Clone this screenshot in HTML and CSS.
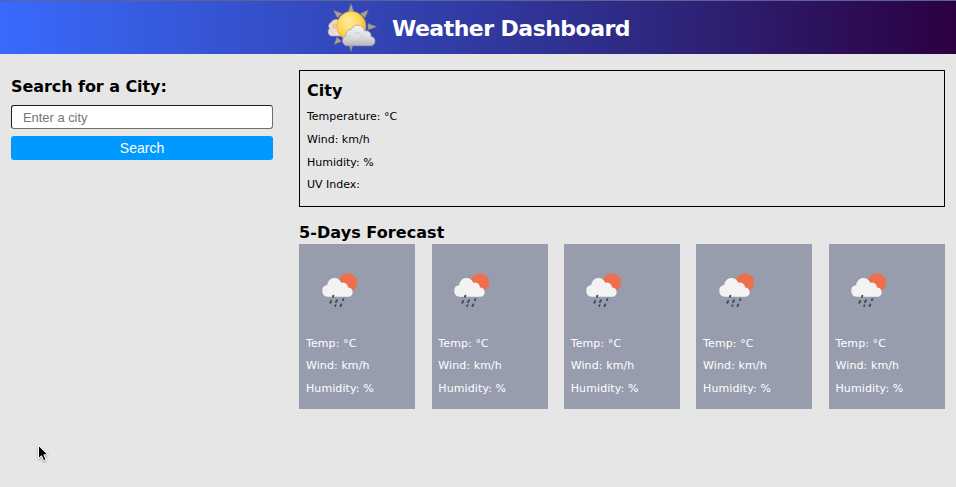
FILE: index.html
```html
<!DOCTYPE html>
<html lang="en">
<head>
<meta charset="utf-8">
<title>Weather Dashboard</title>
<link rel="stylesheet" href="styles.css">
</head>
<body>
<svg class="defs" aria-hidden="true">
  <symbol id="rain" viewBox="0 0 50 50">
    <circle cx="33" cy="17.500" r="9.300" fill="#ee6f4d"/>
    <path d="M12.500 31.700a5.900 5.900 0 0 1-.2-11.700 7.200 7.200 0 0 1 14-2.200 5 5 0 0 1 6.700 4.700 4.700 4.700 0 0 1 1.300 9.200z" fill="#f3f3f3"/>
    <path d="M18.300 30.800l-.3.900M16.200 36l-.9 1.800M22 35.200l-1 1.900M28.300 34.200l-.4.900M20.500 40.300l-.3.600M26.300 39.500l-.8 1.500" stroke="#4a4b52" stroke-width="2" stroke-linecap="round"/>
  </symbol>
</svg>
<header class="header">
  <svg class="logo" viewBox="0 0 64 56" aria-hidden="true">
    <defs>
      <radialGradient id="sun" cx=".4" cy=".35" r=".7"><stop offset="0" stop-color="#fff09a"/><stop offset=".6" stop-color="#fcd552"/><stop offset="1" stop-color="#edaf35"/></radialGradient>
      <linearGradient id="cloud" x1="0" y1="0" x2="0" y2="1"><stop offset="0" stop-color="#f4f4f4"/><stop offset=".6" stop-color="#dcdcde"/><stop offset="1" stop-color="#b5b5b9"/></linearGradient>
    </defs>
    <path d="M12 36a4.500 4.500 0 0 1-1.500-7.500 4 4 0 0 1 1.500-6 6 6 0 0 1 11 1.500v12z" fill="#e6dcda" stroke="#b9aaa6" stroke-width=".7"/>
    <circle cx="16" cy="26" r="3" fill="#fac292"/>
    <path d="M32 3.500l3 8.500h-6zM14.500 10.300l8.500 3.200-4.500 4.500zM49.300 10l-3.300 8-4.700-4.500zM57.500 26.800l-8.500 3.200v-6.500zM15 44.500l3-7.500 4.500 4.500zM32 51.700l-2.500-8.500h5z" fill="#aaa095" stroke="#77777f" stroke-width=".6"/>
    <circle cx="32.300" cy="26" r="14.500" fill="url(#sun)" stroke="#dca849" stroke-width=".7"/>
    <path d="M29 45.700a5 5 0 0 1-2-9.700 5.400 5.400 0 0 1 5.300-6.700 7 7 0 0 1 13.200 1.700 5 5 0 0 1 6.500 5.500 4.700 4.700 0 0 1 .5 9.200z" fill="url(#cloud)" stroke="#a3a3a8" stroke-width=".8"/>
    <path d="M28 37q4-2.500 6.500 1M35 35q2-4 6-2M40 39q2-4 6-2" fill="none" stroke="#c5c5c9" stroke-width=".8"/>
  </svg>
  <h1 class="title">Weather Dashboard</h1>
</header>
<main class="main">
  <aside class="search">
    <h2 class="search-title">Search for a City:</h2>
    <input class="field" type="text" placeholder="Enter a city">
    <button class="button">Search</button>
  </aside>
  <section class="results">
    <article class="today">
      <h2 class="city">City</h2>
      <p class="today-row">Temperature: °C</p>
      <p class="today-row">Wind: km/h</p>
      <p class="today-row">Humidity: %</p>
      <p class="today-row">UV Index:</p>
    </article>
    <h2 class="forecast-title">5-Days Forecast</h2>
    <div class="forecast">
      <article class="card"><svg class="icon"><use href="#rain"/></svg><p>Temp: °C</p><p>Wind: km/h</p><p>Humidity: %</p></article>
      <article class="card"><svg class="icon"><use href="#rain"/></svg><p>Temp: °C</p><p>Wind: km/h</p><p>Humidity: %</p></article>
      <article class="card"><svg class="icon"><use href="#rain"/></svg><p>Temp: °C</p><p>Wind: km/h</p><p>Humidity: %</p></article>
      <article class="card"><svg class="icon"><use href="#rain"/></svg><p>Temp: °C</p><p>Wind: km/h</p><p>Humidity: %</p></article>
      <article class="card"><svg class="icon"><use href="#rain"/></svg><p>Temp: °C</p><p>Wind: km/h</p><p>Humidity: %</p></article>
    </div>
  </section>
</main>
<svg class="cursor" viewBox="0 0 14 20" aria-hidden="true"><path d="M1.500 1.500v13l3-2.800 2.200 5 2.300-1-2.100-4.900h4.100z" fill="#000" stroke="#fff" stroke-width="1"/></svg>
</body>
</html>
```
FILE: styles.css
```css
* { box-sizing: border-box; margin: 0; padding: 0; }
body {
  height: 487px;
  overflow: hidden;
  background: #e6e6e6;
  color: #000;
  font-family: Verdana, "DejaVu Sans", sans-serif;
  font-size: 11px;
}
.defs { position: absolute; width: 0; height: 0; }
.header {
  display: flex;
  align-items: center;
  height: 54px;
  padding-left: 319px;
  border-top: 1px solid #5d6296;
  background: linear-gradient(to right, #396afc, #2e2880 68%, #2b0040);
}
.logo { width: 64px; height: 56px; }
.title {
  margin: 2px 0 0 9px;
  color: #fff;
  font-size: 22px;
  line-height: 28px;
  letter-spacing: -.53px;
}
.main { display: flex; gap: 26px; padding: 16px 11px 0; }
.search { display: flex; flex-direction: column; width: 262px; }
.search-title { margin-top: 6px; font-size: 16px; line-height: 21px; letter-spacing: -.07px; }
.field {
  height: 24px;
  margin-top: 8px;
  padding: 0 11px;
  border: 1px solid #6e6e6e;
  border-top-color: #222;
  border-left-color: #222;
  border-radius: 3px;
  background: #fff;
  font: 13px "Liberation Sans", sans-serif;
  letter-spacing: -.05px;
}
.field::placeholder { color: #757575; }
.button {
  height: 24px;
  margin-top: 7px;
  border: 0;
  border-radius: 3px;
  background: #09f;
  color: #fff;
  font: 14px "Liberation Sans", sans-serif;
}
.results { width: 646px; }
.today { height: 137px; padding: 9px 7px; border: 1px solid #000; }
.city { font-size: 16px; line-height: 21px; margin-bottom: 5px; }
.today-row { line-height: 22.8px; }
.forecast-title { margin-top: 15px; font-size: 16px; line-height: 22px; letter-spacing: .07px; }
.forecast { display: grid; grid-template-columns: repeat(5, 116.1px); gap: 16.3px; margin-left: .15px; }
.card { height: 165px; padding: 21px 6.800px 0; background: #989dae; color: #fff; line-height: 22.6px; letter-spacing: .1px; }
.icon { display: block; width: 50px; height: 50px; margin: 0 0 17.600px 8.600px; }
.cursor { position: absolute; left: 37px; top: 444px; width: 14px; height: 20px; filter: drop-shadow(0 1px 1px #0005); }
```
